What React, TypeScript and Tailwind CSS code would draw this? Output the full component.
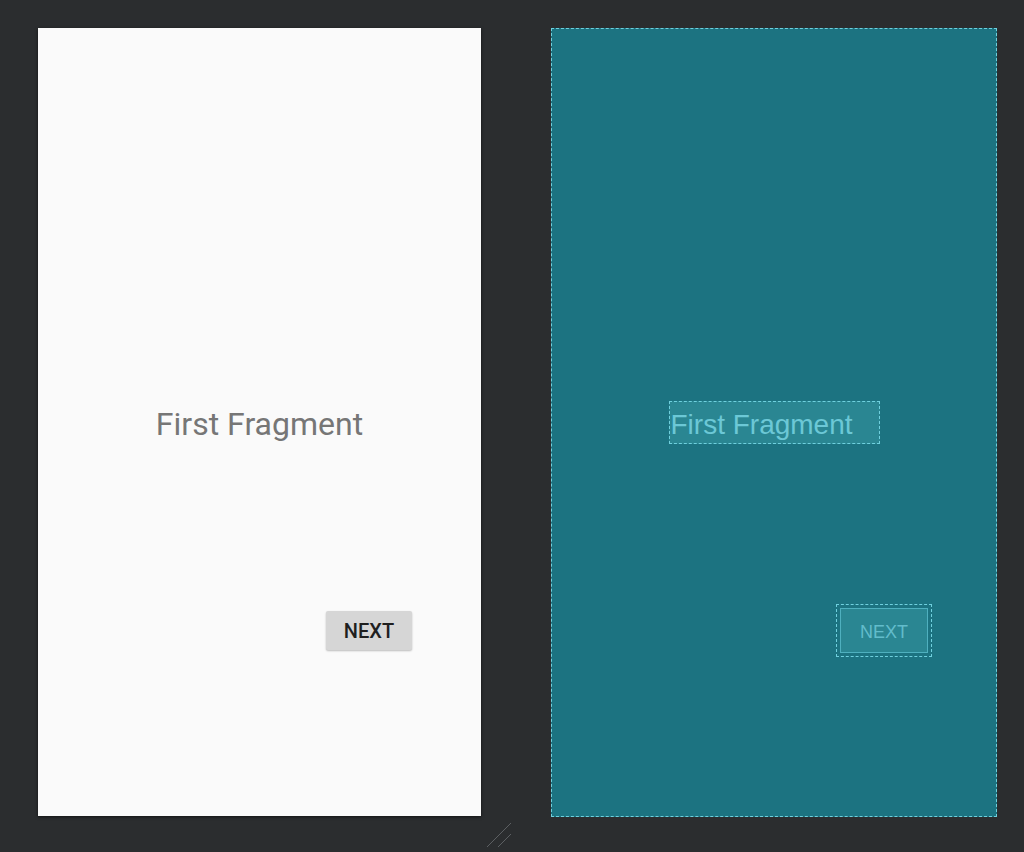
export default function App() {
  return (
    <div className="w-[1024px] h-[852px] bg-[#2b2d2f] overflow-hidden flex flex-col">
      <div className="flex pl-[38px] pt-[28px] gap-[70px]">
        {/* design preview */}
        <div className="w-[443px] h-[788px] bg-[#fafafa] shadow-[0_1px_3px_rgba(0,0,0,0.6)] flex flex-col items-center pt-[376px]">
          <p className="font-['Roboto'] text-[32px] leading-[40px] text-[#767676]">First Fragment</p>
          <button className="self-end mr-[69px] mt-[167px] w-[86px] h-[39px] bg-[#d6d6d6] rounded-[2px] shadow-[0_1px_2px_rgba(0,0,0,0.25)] font-['Roboto'] font-medium text-[20px] text-[#1f1f1f] flex items-center justify-center">
            NEXT
          </button>
        </div>

        {/* blueprint */}
        <div className="w-[446px] h-[789px] bg-[#1c7381] border border-dashed border-[#6fd0de] flex flex-col items-center pt-[372px]">
          <div className="w-[211px] h-[43px] bg-[#2a8692] border border-dashed border-[#6fd0de] flex items-end pb-[3px] pl-[1px]">
            <span className="font-['Liberation_Sans'] text-[28px] leading-[30px] text-[#6cc8d6]">First Fragment</span>
          </div>
          <div className="self-end mr-[64px] mt-[160px] w-[96px] h-[53px] border border-dashed border-[#6fd0de] p-[3px]">
            <div className="w-full h-full bg-[#2a8692] border border-[#4fb0bf] flex items-center justify-center pt-[3px]">
              <span className="font-['Liberation_Sans'] text-[18px] text-[#62bccb]">NEXT</span>
            </div>
          </div>
        </div>
      </div>
      <div className="flex justify-center mt-[5px]">
        <svg width="26" height="26" viewBox="0 0 26 26" className="mr-[26px]">
          <line x1="1" y1="25" x2="25" y2="1" stroke="#5c5f62" strokeWidth="1" />
          <line x1="12" y1="25" x2="25" y2="12" stroke="#5c5f62" strokeWidth="1" />
        </svg>
      </div>
    </div>
  );
}
